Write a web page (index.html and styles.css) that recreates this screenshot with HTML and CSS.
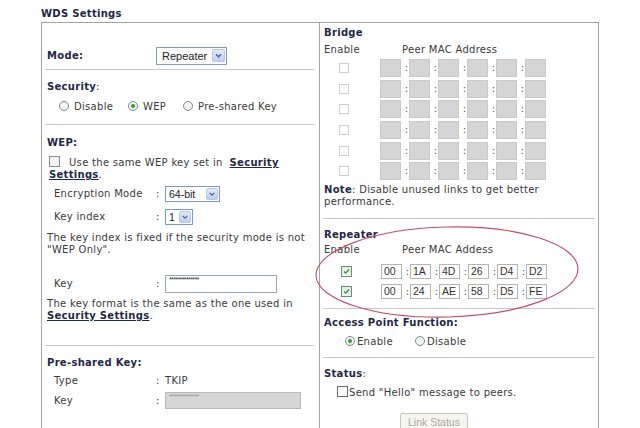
FILE: index.html
```html
<!doctype html>
<html lang="en">
<head>
  <meta charset="UTF-8">
  <title>WDS Settings</title>
  <link rel="stylesheet" href="styles.css">
</head>
<body>
<div class="page">
  <h1 class="title">WDS Settings</h1>
  <div class="wds">

    <!-- left column -->
    <div class="col left">
      <div class="mode">
        <b class="hd mode-lbl">Mode:</b>
        <span class="sel sel-mode">Repeater<i class="arr"><svg viewBox="0 0 13 12"><path d="M3.5 4.5 L6.5 7.5 L9.5 4.5"/></svg></i></span>
      </div>
      <div class="rule"></div>

      <div class="security">
        <div><b class="hd">Security</b>:</div>
        <div class="radios">
          <label><i class="radio"></i>Disable</label>
          <label><i class="radio on"></i>WEP</label>
          <label><i class="radio"></i>Pre-shared Key</label>
        </div>
      </div>
      <div class="rule"></div>

      <div class="wep">
        <div><b class="hd">WEP:</b></div>
        <div class="same"><i class="chk"></i>Use the same WEP key set in&nbsp; <a href="#" class="lnk">Security Settings</a>.</div>
        <div class="frow enc">
          <span>Encryption Mode</span><span>:</span>
          <span class="sel sel-enc">64-bit<i class="arr"><svg viewBox="0 0 13 12"><path d="M3.5 4.5 L6.5 7.5 L9.5 4.5"/></svg></i></span>
        </div>
        <div class="frow idx">
          <span>Key index</span><span>:</span>
          <span class="sel sel-idx">1<i class="arr"><svg viewBox="0 0 13 12"><path d="M3.5 4.5 L6.5 7.5 L9.5 4.5"/></svg></i></span>
        </div>
        <p class="txt idx-note">The key index is fixed if the security mode is not "WEP Only".</p>
        <div class="frow key">
          <span>Key</span><span>:</span>
          <span class="inp">**************</span>
        </div>
        <p class="txt fmt-note">The key format is the same as the one used in <a href="#" class="lnk">Security Settings</a>.</p>
      </div>
      <div class="rule"></div>

      <div class="psk">
        <div><b class="hd">Pre-shared Key:</b></div>
        <div class="frow type">
          <span>Type</span><span>:</span><span>TKIP</span>
        </div>
        <div class="frow pkey">
          <span>Key</span><span>:</span>
          <span class="inp off">**************</span>
        </div>
      </div>
    </div>

    <!-- right column -->
    <div class="col right">
      <div class="bridge">
        <div><b class="hd">Bridge</b></div>
        <div class="mhead"><span>Enable</span><span>Peer MAC Address</span></div>
        <div class="mrows">
          <div class="mrow"><i class="chk dis"></i><span class="box"></span><span class="sep">:</span><span class="box"></span><span class="sep">:</span><span class="box"></span><span class="sep">:</span><span class="box"></span><span class="sep">:</span><span class="box"></span><span class="sep">:</span><span class="box"></span></div>
          <div class="mrow"><i class="chk dis"></i><span class="box"></span><span class="sep">:</span><span class="box"></span><span class="sep">:</span><span class="box"></span><span class="sep">:</span><span class="box"></span><span class="sep">:</span><span class="box"></span><span class="sep">:</span><span class="box"></span></div>
          <div class="mrow"><i class="chk dis"></i><span class="box"></span><span class="sep">:</span><span class="box"></span><span class="sep">:</span><span class="box"></span><span class="sep">:</span><span class="box"></span><span class="sep">:</span><span class="box"></span><span class="sep">:</span><span class="box"></span></div>
          <div class="mrow"><i class="chk dis"></i><span class="box"></span><span class="sep">:</span><span class="box"></span><span class="sep">:</span><span class="box"></span><span class="sep">:</span><span class="box"></span><span class="sep">:</span><span class="box"></span><span class="sep">:</span><span class="box"></span></div>
          <div class="mrow"><i class="chk dis"></i><span class="box"></span><span class="sep">:</span><span class="box"></span><span class="sep">:</span><span class="box"></span><span class="sep">:</span><span class="box"></span><span class="sep">:</span><span class="box"></span><span class="sep">:</span><span class="box"></span></div>
          <div class="mrow"><i class="chk dis"></i><span class="box"></span><span class="sep">:</span><span class="box"></span><span class="sep">:</span><span class="box"></span><span class="sep">:</span><span class="box"></span><span class="sep">:</span><span class="box"></span><span class="sep">:</span><span class="box"></span></div>
        </div>
        <p class="txt note"><b class="hd">Note</b>: Disable unused links to get better performance.</p>
      </div>
      <div class="rule"></div>

      <div class="repeater">
        <div><b class="hd">Repeater</b></div>
        <div class="mhead"><span>Enable</span><span>Peer MAC Addess</span></div>
        <div class="mrow rep"><i class="chk on"><svg viewBox="0 0 11 11"><path d="M2.5 5.5 L4.5 7.5 L8.5 3"/></svg></i><span class="box">00</span><span class="sep">:</span><span class="box">1A</span><span class="sep">:</span><span class="box">4D</span><span class="sep">:</span><span class="box">26</span><span class="sep">:</span><span class="box">D4</span><span class="sep">:</span><span class="box">D2</span></div>
        <div class="mrow rep"><i class="chk on"><svg viewBox="0 0 11 11"><path d="M2.5 5.5 L4.5 7.5 L8.5 3"/></svg></i><span class="box">00</span><span class="sep">:</span><span class="box">24</span><span class="sep">:</span><span class="box">AE</span><span class="sep">:</span><span class="box">58</span><span class="sep">:</span><span class="box">D5</span><span class="sep">:</span><span class="box">FE</span></div>
      </div>
      <div class="rule"></div>

      <div class="ap">
        <div><b class="hd">Access Point Function:</b></div>
        <div class="radios ap-radios">
          <label><i class="radio on"></i>Enable</label>
          <label><i class="radio"></i>Disable</label>
        </div>
      </div>
      <div class="rule"></div>

      <div class="status">
        <div><b class="hd">Status</b>:</div>
        <div class="hello"><i class="chk plain"></i>Send "Hello" message to peers.</div>
        <div class="btnrow"><span class="btn">Link Status</span></div>
      </div>
    </div>
  </div>

  <!-- hand drawn mark round the repeater block -->
  <svg class="mark" viewBox="0 0 280 110"><ellipse cx="138" cy="53" rx="131" ry="45" transform="rotate(-1.5 138 53)"/></svg>
</div>
</body>
</html>
```

FILE: styles.css
```css
body {
  margin: 0;
  background: #fff;
  font-family: "DejaVu Sans", Verdana, sans-serif;
  font-size: 10px;
  line-height: 12px;
  letter-spacing: 0.3px;
  color: #3a3a3a;
}
.page {
  position: relative;
  width: 640px;
  height: 428px;
  overflow: hidden;
  padding-left: 41px;
  box-sizing: border-box;
}
.title {
  margin: 0;
  padding-top: 8px;
  height: 14px;
  font-size: 10px;
  line-height: 12px;
  color: #1d2747;
}
.wds {
  display: grid;
  grid-template-columns: 278px 278px;
  border: 1px solid #a3a3a3;
  border-bottom: none;
  width: 558px;
  height: 420px;
  box-sizing: border-box;
}
.col.left {
  border-right: 1px solid #a3a3a3;
}
.hd {
  color: #1f2846;
  font-weight: bold;
}
.rule {
  border-top: 1px solid #c9c9c9;
}
.left .rule {
  margin: 0 5px 0 3px;
}
.right .rule {
  margin: 0 3px 0 3px;
}
.txt {
  margin: 0;
}
.lnk {
  color: #1f2846;
  font-weight: bold;
}

/* selects and inputs */
.sel {
  display: inline-flex;
  align-items: center;
  justify-content: space-between;
  box-sizing: border-box;
  border: 1px solid #7f9db9;
  background: #fff;
  font-family: "Liberation Sans", Arial, sans-serif;
  letter-spacing: 0;
  color: #222;
}
.arr {
  display: block;
  box-sizing: border-box;
  border: 1px solid #b3c6ef;
  border-radius: 2px;
  background: linear-gradient(#e3ebfd, #bccff7);
}
.arr svg {
  display: block;
  width: 100%;
  height: 100%;
}
.arr path {
  fill: none;
  stroke: #4d6185;
  stroke-width: 1.6;
}
.sel-mode {
  width: 71px;
  height: 18px;
  padding: 0 1px 0 5px;
  font-size: 11px;
}
.sel-mode .arr {
  width: 13px;
  height: 13px;
}
.sel-enc {
  width: 55px;
  height: 16px;
  padding: 0 1px 0 3px;
  font-size: 10.5px;
}
.sel-idx {
  width: 28px;
  height: 16px;
  padding: 0 1px 0 3px;
  font-size: 10.5px;
}
.sel-enc .arr, .sel-idx .arr {
  width: 12px;
  height: 12px;
}
.inp {
  display: block;
  box-sizing: border-box;
  height: 18px;
  width: 112px;
  padding: 0 3px;
  border: 1px solid #9aa7b5;
  font-family: "Liberation Sans", Arial, sans-serif;
  font-size: 7px;
  line-height: 8px;
  letter-spacing: -0.6px;
  color: #333;
}
.inp.off {
  width: 136px;
  height: 17px;
  background: #d6d6d6;
  border-color: #b9b9b9;
  color: #9c9c9c;
}

/* radios and checkboxes */
.radio {
  display: inline-block;
  box-sizing: border-box;
  width: 10px;
  height: 10px;
  border: 1px solid #7c8c9c;
  border-radius: 50%;
  background: #f4f4f0;
  vertical-align: -1px;
  position: relative;
}
.radio.on::after {
  content: "";
  position: absolute;
  left: 2px;
  top: 2px;
  width: 4px;
  height: 4px;
  border-radius: 50%;
  background: #2aa02a;
}
.chk {
  display: inline-block;
  box-sizing: border-box;
  width: 11px;
  height: 11px;
  border: 1px solid #8c8c8c;
  background: #f4f4f2;
  vertical-align: -1px;
}
.chk.dis {
  width: 10px;
  height: 10px;
  border-color: #cfcfcf;
  background: #fff;
}
.chk.on {
  width: 11px;
  height: 11px;
  border-color: #6e8a7c;
  background: linear-gradient(#e4eae0, #f6f7f3);
}
.chk.on svg {
  display: block;
  width: 100%;
  height: 100%;
}
.chk.on path {
  fill: none;
  stroke: #23a023;
  stroke-width: 1.6;
}
.chk.plain {
  width: 11px;
  height: 11px;
  border-color: #6a6a6a;
  background: #fff;
}

/* left column sections */
.left .mode,
.left .security,
.left .wep,
.left .psk {
  padding-left: 5px;
  padding-right: 5px;
}
.mode {
  height: 46px;
  box-sizing: border-box;
  padding-top: 19px;
  display: flex;
  align-items: center;
}
.mode-lbl {
  width: 109px;
  line-height: 18px;
}
.security {
  height: 54px;
  box-sizing: border-box;
  padding-top: 11px;
}
.radios {
  margin-top: 8px;
  padding-left: 12px;
  display: grid;
  grid-template-columns: 69px 55px auto;
}
.radios .radio {
  margin-right: 5px;
}
.wep {
  height: 220px;
  box-sizing: border-box;
  padding-top: 12px;
}
.same {
  margin-top: 7px;
  padding-left: 2px;
}
.same .chk {
  margin-right: 9px;
}
.frow {
  display: grid;
  grid-template-columns: 102px 9px auto;
  align-items: center;
  padding-left: 7px;
}
.enc {
  margin-top: 5px;
  height: 16px;
}
.idx {
  margin-top: 7px;
  height: 16px;
}
.idx-note {
  margin-top: 7px;
}
.key {
  margin-top: 19px;
  height: 18px;
}
.fmt-note {
  margin-top: 5px;
}
.psk {
  padding-top: 11px;
}
.type {
  margin-top: 6px;
  height: 12px;
}
.pkey {
  margin-top: 5px;
  height: 17px;
}

/* right column sections */
.bridge,
.repeater,
.ap,
.status {
  padding-left: 4px;
  padding-right: 3px;
  box-sizing: border-box;
}
.bridge {
  height: 195px;
  padding-top: 4px;
}
.mhead {
  margin-top: 5px;
  display: flex;
}
.mhead span:first-child {
  width: 78px;
}
.mrows {
  margin-top: 3px;
}
.mrow {
  display: flex;
  align-items: center;
  height: 18px;
  margin-bottom: 2.7px;
  padding-left: 15px;
}
.mrow .chk {
  margin-right: 31px;
}
.box {
  display: block;
  box-sizing: border-box;
  width: 21px;
  height: 18px;
  background: #d5d5d5;
  border: 1px solid #cacaca;
}
.sep {
  width: 8px;
  text-align: right;
  padding-right: 1px;
  box-sizing: border-box;
  letter-spacing: 0;
  color: #555;
}
.note {
  margin-top: 4px;
}
.repeater {
  height: 89px;
  padding-top: 10px;
}
.repeater .mhead {
  margin-top: 3px;
}
.mrow.rep {
  height: 15px;
  margin: 8px 0 0;
  padding-left: 17px;
}
.mrow.rep + .mrow.rep {
  margin-top: 5px;
}
.mrow.rep .chk {
  margin-right: 29px;
}
.rep .box {
  height: 15px;
  background: #fff;
  border-color: #b4b4b4;
  padding-left: 2px;
  font-family: "Liberation Sans", Arial, sans-serif;
  font-size: 10.5px;
  line-height: 13px;
  letter-spacing: 0;
  color: #333;
}
.ap {
  height: 48px;
  padding-top: 8px;
}
.ap-radios {
  margin-top: 7px;
  padding-left: 21px;
  grid-template-columns: 70px auto;
}
.ap-radios .radio {
  margin-right: 2px;
}
.status {
  padding-top: 10px;
}
.hello {
  margin-top: 6px;
  padding-left: 13px;
}
.hello .chk {
  margin-right: 1px;
}
.btnrow {
  margin-top: 14px;
  padding-left: 76px;
}
.btn {
  display: inline-block;
  box-sizing: border-box;
  width: 68px;
  height: 18px;
  border: 1px solid #cbc9bd;
  border-radius: 2px;
  background: #f6f6f1;
  text-align: center;
  font-family: "Liberation Sans", Arial, sans-serif;
  font-size: 10.5px;
  line-height: 16px;
  letter-spacing: 0;
  color: #a9a899;
}

/* red mark */
.mark {
  position: absolute;
  left: 309px;
  top: 219px;
  width: 280px;
  height: 110px;
}
.mark ellipse {
  fill: none;
  stroke: #c24f60;
  stroke-width: 1.1;
}
```
